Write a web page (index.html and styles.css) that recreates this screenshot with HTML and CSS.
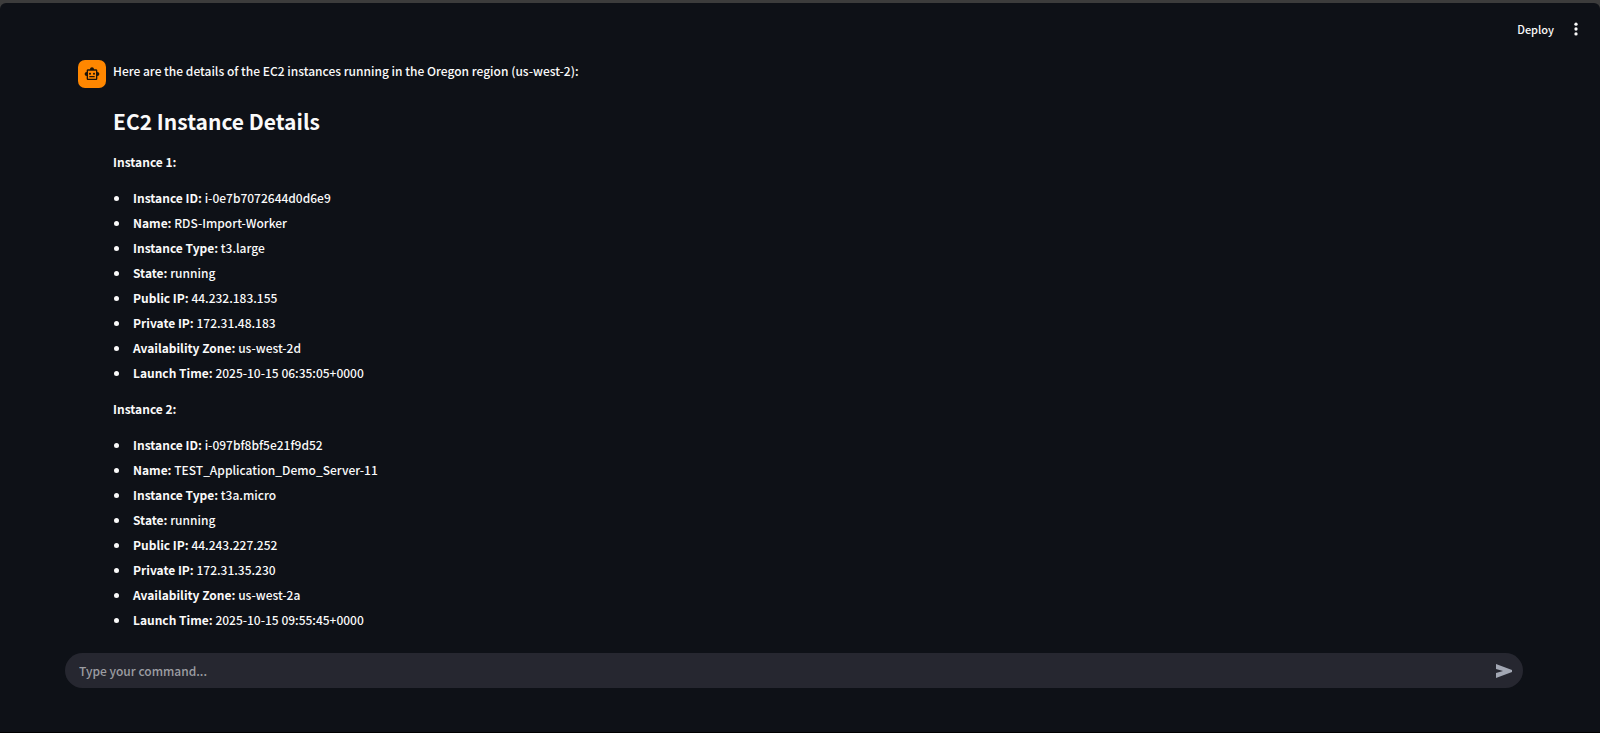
FILE: index.html
```html
<!DOCTYPE html>
<html lang="en">
<head>
<meta charset="utf-8">
<meta name="viewport" content="width=device-width, initial-scale=1">
<title>EC2 Instance Details</title>
<link rel="stylesheet" href="styles.css">
</head>
<body>
<div class="app">
  <header class="toolbar">
    <button class="deploy" type="button">Deploy</button>
    <button class="menu" type="button" aria-label="Main menu">
      <svg viewBox="0 0 24 24" width="18" height="18" fill="currentColor" aria-hidden="true"><circle cx="12" cy="5.500" r="2.200"/><circle cx="12" cy="12" r="2.200"/><circle cx="12" cy="18.500" r="2.200"/></svg>
    </button>
  </header>
  <main class="chat">
    <article class="message">
      <div class="avatar">
        <svg viewBox="0 0 24 24" width="16" height="16" aria-hidden="true"><path fill="currentColor" fill-rule="evenodd" d="M20 9V7c0-1.100-.9-2-2-2h-3c0-1.660-1.340-3-3-3S9 3.340 9 5H6c-1.100 0-2 .9-2 2v2c-1.660 0-3 1.340-3 3s1.340 3 3 3v4c0 1.100.9 2 2 2h12c1.100 0 2-.9 2-2v-4c1.660 0 3-1.340 3-3s-1.340-3-3-3zm-2 10H6V7h12v12zM9 13c-.83 0-1.500-.67-1.500-1.500S8.170 10 9 10s1.500.67 1.500 1.500S9.830 13 9 13zm7.500-1.500c0 .83-.67 1.500-1.500 1.500s-1.500-.67-1.500-1.500.67-1.500 1.500-1.500 1.500.67 1.500 1.500zM8 15h8v2H8v-2z"/></svg>
      </div>
      <div class="content">
        <p>Here are the details of the EC2 instances running in the Oregon region (us-west-2):</p>
        <h2>EC2 Instance Details</h2>
        <p><strong>Instance 1:</strong></p>
        <ul>
          <li><strong>Instance ID:</strong> i-0e7b7072644d0d6e9</li>
          <li><strong>Name:</strong> RDS-Import-Worker</li>
          <li><strong>Instance Type:</strong> t3.large</li>
          <li><strong>State:</strong> running</li>
          <li><strong>Public IP:</strong> 44.232.183.155</li>
          <li><strong>Private IP:</strong> 172.31.48.183</li>
          <li><strong>Availability Zone:</strong> us-west-2d</li>
          <li><strong>Launch Time:</strong> 2025-10-15 06:35:05+0000</li>
        </ul>
        <p><strong>Instance 2:</strong></p>
        <ul>
          <li><strong>Instance ID:</strong> i-097bf8bf5e21f9d52</li>
          <li><strong>Name:</strong> TEST_Application_Demo_Server-11</li>
          <li><strong>Instance Type:</strong> t3a.micro</li>
          <li><strong>State:</strong> running</li>
          <li><strong>Public IP:</strong> 44.243.227.252</li>
          <li><strong>Private IP:</strong> 172.31.35.230</li>
          <li><strong>Availability Zone:</strong> us-west-2a</li>
          <li><strong>Launch Time:</strong> 2025-10-15 09:55:45+0000</li>
        </ul>
      </div>
    </article>
  </main>
  <form class="composer">
    <input type="text" aria-label="Command" placeholder="Type your command...">
    <button class="send" type="button" aria-label="Send">
      <svg viewBox="0 0 16 14" width="16" height="14" fill="currentColor" aria-hidden="true"><path d="M0 0 16 6v2L0 14V9l7-2-7-2z"/></svg>
    </button>
  </form>
</div>
</body>
</html>
```
FILE: styles.css
```css
* {
  box-sizing: border-box;
}

body {
  margin: 0;
  background: #3c3c3c;
  color: #fafafa;
  font: 500 12px/22px "Source Sans Pro", "Noto Sans CJK SC", sans-serif;
}

button,
input {
  padding: 0;
  border: 0;
  background: none;
  color: inherit;
  font: inherit;
}

svg {
  display: block;
}

.app {
  display: flex;
  flex-direction: column;
  min-height: calc(100vh - 3px);
  margin-top: 3px;
  border-bottom: 1px solid #000;
  border-radius: 6px 6px 0 0;
  background: #0e1117;
}

.toolbar {
  display: flex;
  justify-content: flex-end;
  align-items: center;
  gap: 13px;
  padding: 15px 15px 0;
}

.deploy {
  font-size: 11px;
}

.chat {
  flex: 1;
  padding: 20px 78px 0;
}

.message {
  display: flex;
  gap: 7px;
}

.avatar {
  display: grid;
  flex: none;
  place-items: center;
  width: 28px;
  height: 28px;
  border-radius: 7px;
  background: #ff8700;
  color: #1c1408;
}

.content {
  min-width: 0;
}

.content p {
  margin: 0 0 14px;
}

.content h2 {
  margin: 25px 0 16px;
  font-size: 21px;
  line-height: 28px;
}

.content ul {
  display: grid;
  gap: 3px;
  margin: 0 0 14px;
  padding: 0;
  list-style: none;
}

.content li::before {
  content: "";
  display: inline-block;
  width: 5px;
  height: 5px;
  margin: 0 14px 0 1px;
  border-radius: 50%;
  background: currentColor;
  vertical-align: 2px;
}

.composer {
  display: flex;
  align-items: center;
  height: 35px;
  margin: 0 77px 44px 65px;
  padding: 0 11px 0 14px;
  border-radius: 18px;
  background: #262730;
}

.composer input {
  flex: 1;
  min-width: 0;
  outline: 0;
}

.composer input::placeholder {
  color: #9c9da2;
  opacity: 1;
}

.send {
  color: #a3a8b4;
}
```
